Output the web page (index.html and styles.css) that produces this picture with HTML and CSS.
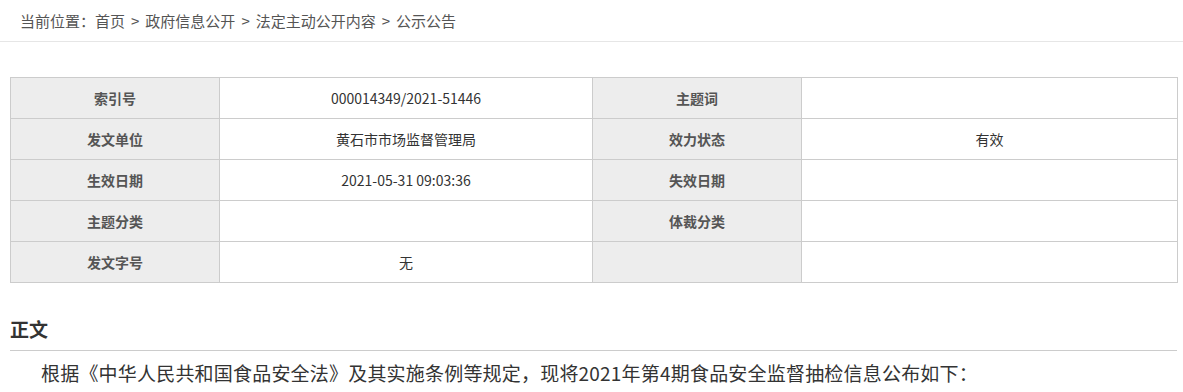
FILE: index.html
```html
<!DOCTYPE html>
<html lang="zh-CN">
<head>
  <meta charset="UTF-8" />
  <title>公示公告</title>
  <link rel="stylesheet" href="styles.css">
</head>
<body>

  <!-- 当前位置 -->
  <div class="crumbs">
    当前位置：<a href="#">首页</a><span class="sep">&gt;</span><a href="#">政府信息公开</a><span class="sep">&gt;</span><a href="#">法定主动公开内容</a><span class="sep">&gt;</span><a href="#">公示公告</a>
  </div>

  <div class="content">
    <table class="meta">
      <colgroup>
        <col class="col-label">
        <col class="col-value">
        <col class="col-label">
        <col class="col-value-last">
      </colgroup>
      <tr>
        <th>索引号</th>
        <td>000014349/2021-51446</td>
        <th>主题词</th>
        <td></td>
      </tr>
      <tr>
        <th>发文单位</th>
        <td>黄石市市场监督管理局</td>
        <th>效力状态</th>
        <td>有效</td>
      </tr>
      <tr>
        <th>生效日期</th>
        <td>2021-05-31 09:03:36</td>
        <th>失效日期</th>
        <td></td>
      </tr>
      <tr>
        <th>主题分类</th>
        <td></td>
        <th>体裁分类</th>
        <td></td>
      </tr>
      <tr>
        <th>发文字号</th>
        <td>无</td>
        <th></th>
        <td></td>
      </tr>
    </table>

    <h2 class="article-title">正文</h2>
    <p class="article-text">根据《中华人民共和国食品安全法》及其实施条例等规定，现将2021年第4期食品安全监督抽检信息公布如下：</p>
  </div>

</body>
</html>
```

FILE: styles.css
```css
body {
  margin: 0;
  font-family: "Noto Sans CJK SC", "Liberation Sans", sans-serif;
  color: #333;
  background: #fff;
}

.crumbs {
  height: 41px;
  line-height: 41px;
  padding-left: 20px;
  font-size: 15px;
  color: #555;
  border-bottom: 1px solid #e6e6e6;
}

.crumbs a {
  color: #555;
  text-decoration: none;
}

.crumbs .sep {
  margin: 0 6px;
}

.content {
  width: 1167px;
  margin-left: 10px;
}

.meta {
  width: 1167px;
  margin-top: 35px;
  border-collapse: collapse;
  table-layout: fixed;
}

.col-label {
  width: 209px;
}

.col-value {
  width: 373px;
}

.col-value-last {
  width: 376px;
}

.meta th,
.meta td {
  height: 40px;
  padding: 0;
  border: 1px solid #cccccc;
  text-align: center;
  font-size: 14px;
}

.meta th {
  background: #ededed;
  color: #555;
  font-weight: bold;
}

.meta td {
  color: #333;
}

.article-title {
  margin: 28px 0 0;
  padding-bottom: 3px;
  line-height: 36px;
  font-size: 19px;
  font-weight: bold;
  color: #333;
  border-bottom: 1px solid #cccccc;
}

.article-text {
  margin: 7px 0 0;
  text-indent: 31px;
  line-height: 30px;
  font-size: 19px;
  letter-spacing: 0.2px;
  color: #333;
}
```
